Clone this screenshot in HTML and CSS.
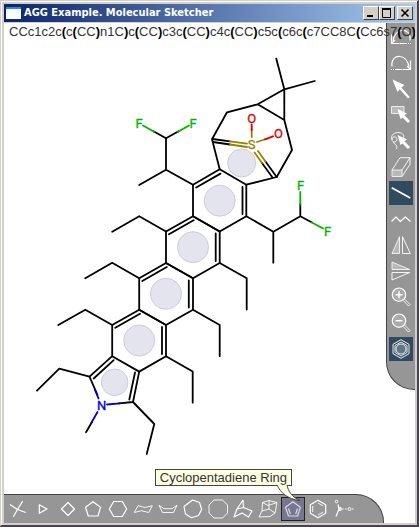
FILE: index.html
```
<!DOCTYPE html>
<html lang="en">
<head>
<meta charset="utf-8">
<title>AGG Example. Molecular Sketcher</title>
<link rel="stylesheet" href="styles.css">
</head>
<body>
<main class="window">
  <header class="titlebar">
    <span class="app-icon"></span>
    <h1 class="title">AGG Example. Molecular Sketcher</h1>
    <div class="caption-buttons">
      <button class="caption" aria-label="Minimize"><svg viewBox="0 0 12 10"><path d="M2 8h6" stroke-width="2"/></svg></button>
      <button class="caption" aria-label="Maximize"><svg viewBox="0 0 12 10"><path d="M1 1h9" stroke-width="2"/><path d="M1.5 1v8.500h8v-8.500"/></svg></button>
      <button class="caption close" aria-label="Close"><svg viewBox="0 0 12 10"><path d="M2.500 1.500l7 7M9.500 1.500l-7 7" stroke-width="1.600"/></svg></button>
    </div>
  </header>

  <section class="client">
    <svg class="canvas" viewBox="4 23 411 500" preserveAspectRatio="xMinYMin meet" role="img" aria-label="Molecule">
      <g class="aromatic">
        <circle cx="241.700" cy="163" r="14"/>
        <circle cx="219.700" cy="200.700" r="15.500"/>
        <circle cx="193" cy="247.200" r="15.500"/>
        <circle cx="166" cy="293.800" r="15.500"/>
        <circle cx="139.200" cy="340.500" r="15.500"/>
        <circle cx="114.700" cy="382.300" r="13.300"/>
      </g>
      <g class="bond">
        <path d="M276.300 58.700L284.300 89.300L314.700 81M284.300 89.300L257.700 104.300L284.300 120ZM257.700 104.300L227 112.300L212 139.300L219.700 169.300M284.300 120L292 150L276.700 177L246.300 184.700"/>
        <path d="M219.700 169.300L246.300 184.700V216.200L219.700 231.500L193 216.200V184.700Z"/>
        <path d="M193 216.200L219.700 231.500V263L193 278.300L166 263V231.500Z"/>
        <path d="M166 263L193 278.300V309.700L166 325L139.200 309.700V278.300Z"/>
        <path d="M139.200 309.700L166 325V356.200L139.200 371.600L112.200 356.200V325Z"/>
        <path d="M196.200 187.500L220.500 173.600M242.500 187V214M169 234.200L193.600 220.300M215.700 233.500V261M142.300 281L166.800 267M188.800 280.500V307.500M115.300 327.800L140 313.800M162 327V354"/>
        <path d="M97.500 395L89.500 376.700L112.200 356.200M139.200 371.600L133 402L119 403.300M93.700 378.500L113.700 360.200M135 372.500L129.300 399.500"/>
        <path d="M89.500 376.700L59.300 368.700L37 390.700M133 402L154.300 424L146.700 454M86 432.300L92 422"/>
        <path d="M166 356.200L192.700 371.500V402.700M193 309.700L219.700 325V356.200M219.700 263L246.700 278.300V309.500"/>
        <path d="M112.200 325L85.300 309.700L58.300 325M139.200 278.300L112.200 262.700L85.300 278.300M166 231.500L139.200 216.200L112.200 231.700"/>
        <path d="M193 184.700L166 169.700L139.200 185M166 169.700V138.300L153.500 131.300M166 138.300L178.500 131.300"/>
        <path d="M246.300 216.200L273.300 231.700V262.700M273.300 231.700L300.300 216.200V204M300.300 216.200L312 222.500"/>
        <path d="M212.500 139L230 141.300M213 142L230 144.500M276.700 177L265.500 161.500M272.500 177.500L262 163"/>
      </g>
      <g class="bond sulfur"><path d="M230 141.300L247 143.600M230 144.500L247 147M265.500 161.500L258 151M262 163L254.500 152.500M251.700 137V129M257 142L266 139"/></g>
      <g class="bond oxygen"><path d="M251.700 130V124.500M265 139.300L273 136.300"/></g>
      <g class="bond nitrogen"><path d="M98.500 398.500L95 390M107 404.500L120 403.300M97.500 412L91.500 422.500"/></g>
      <g class="bond fluorine"><path d="M143 125.500L154 131.700M189 125.500L178 131.700M300.300 192V204.500M323 228.500L311.500 222.200"/></g>
      <g class="atom">
        <text class="t-f" x="139" y="128">F</text><text class="t-f" x="193" y="128">F</text>
        <text class="t-f" x="300.500" y="190">F</text><text class="t-f" x="327.500" y="236">F</text>
        <text class="t-o" x="251.700" y="123">O</text><text class="t-o" x="278.500" y="138">O</text>
        <text class="t-s" x="251.700" y="149">S</text><text class="t-n" x="101.700" y="410">N</text>
      </g>
    </svg>

    <nav class="tools side" aria-label="Editing tools">
      <button class="tool" aria-label="Undo"><svg viewBox="0 0 24 24"><path d="M21 15.500C22 8 17 4.500 12.500 5.500C7 6.500 5 10 4 16"/><path d="M2.500 9.500V18.500H10.500M2.500 18.500L6 15"/><path d="M11 18.500h7M19 18.500h1M21 18.500h1"/></svg></button>
      <button class="tool" aria-label="Redo"><svg viewBox="0 0 24 24"><path d="M3 15.500C2 8 7 4.500 11.500 5.500C17 6.500 19 10 20 16"/><path d="M21.500 9.500V18.500H13.500M21.500 18.500L18 15"/><path d="M6 18.500h7M4 18.500h1M2 18.500h1"/></svg></button>
      <button class="tool" aria-label="Select"><svg viewBox="0 0 24 24"><path class="solid" d="M3.500 2.500L15.500 8L12.500 10.500L20.700 20L19 21.500L10.700 12.300L8.500 15Z"/></svg></button>
      <button class="tool" aria-label="Select rectangle"><svg viewBox="0 0 24 24"><path class="tint" d="M2.500 3.500h12.500v7h-12.500z"/><path class="solid" d="M8.500 6L18 10.500L15.500 12.300L21 18L19 20L13.500 14.500L11.500 16Z"/></svg></button>
      <button class="tool" aria-label="Lasso"><svg viewBox="0 0 24 24"><path class="thin" d="M3 10.500C1 6 6 3 10 3.500C14 4 16 7 14 9M3 10.500C3 7 8 7 8 10.500C8 13.500 3 14 3 10.500M4.500 13C5 16 9 15 7.500 20"/><path class="solid" d="M8.500 6L18 10.500L15.500 12.300L21 18L19 20L13.500 14.500L11.500 16Z"/></svg></button>
      <button class="tool" aria-label="Eraser"><svg viewBox="0 0 24 24"><path class="tint" d="M3 15h10v6.500h-10z"/><path class="thin" d="M3 15L11 2.700H21L13 15M21 2.700V9.300L13 21.500"/></svg></button>
      <button class="tool dark" aria-label="Single bond" aria-pressed="true"><svg viewBox="0 0 24 24"><path d="M2.700 6.700L21.300 17" stroke-width="1.700"/></svg></button>
      <button class="tool" aria-label="Chain"><svg viewBox="0 0 24 24"><path d="M2.500 14.500L7 10L11.300 14.500L16.300 10L21.500 14.500"/></svg></button>
      <button class="tool" aria-label="Flip horizontally"><svg viewBox="0 0 24 24"><path class="tint" d="M3 20.500L10.500 3.700V20.500Z"/><path class="thin" d="M13.500 3.700V20.500H21.300Z"/></svg></button>
      <button class="tool" aria-label="Flip vertically"><svg viewBox="0 0 24 24"><path class="tint" d="M3 3L20.700 10.500H3Z"/><path class="thin" d="M3 13.500H20.700L3 21Z"/></svg></button>
      <button class="tool" aria-label="Zoom in"><svg viewBox="0 0 24 24"><circle class="glass" cx="10" cy="9.700" r="6.700"/><path d="M10 6.200v7M6.500 9.700h7" stroke-width="1.500"/><path class="thin" d="M14.200 15.500L19.500 21L21 19.500L15.700 14.200"/></svg></button>
      <button class="tool" aria-label="Zoom out"><svg viewBox="0 0 24 24"><circle class="glass" cx="10" cy="9.700" r="6.700"/><path d="M6.500 9.700h7" stroke-width="1.500"/><path class="thin" d="M14.200 15.500L19.500 21L21 19.500L15.700 14.200"/></svg></button>
      <button class="tool dark" aria-label="Show aromatic rings" aria-pressed="true"><svg viewBox="0 0 24 24"><path class="thin" d="M12 2.700L20 7.300V16.700L12 21.300L4 16.700V7.300Z"/><path class="thin" d="M12 5L18 8.500V15.500L12 19L6 15.500V8.500Z"/><circle cx="12" cy="12" r="5" fill="#5d7689" class="thin"/></svg></button>
    </nav>

    <nav class="tools base" aria-label="Ring templates">
      <button class="tool" aria-label="Cross"><svg viewBox="0 0 24 24"><path d="M4 7.500L11.500 12.500L19.700 15.500M16.700 4L11.500 12.500L7.300 19.700"/></svg></button>
      <button class="tool" aria-label="Cyclopropane"><svg viewBox="0 0 24 24"><path d="M8.300 7.700V16.300L16 12Z"/></svg></button>
      <button class="tool" aria-label="Cyclobutane"><svg viewBox="0 0 24 24"><path d="M12 5.500L18.500 12L12 18.500L5.500 12Z"/></svg></button>
      <button class="tool" aria-label="Cyclopentane"><svg viewBox="0 0 24 24"><path d="M12 4.700L19.500 10.300L17 19H7.300L4.500 10.300Z"/></svg></button>
      <button class="tool" aria-label="Cyclohexane"><svg viewBox="0 0 24 24"><path d="M3.300 12L7.700 4.500H16.300L20.700 12L16.300 19.500H7.700Z"/></svg></button>
      <button class="tool" aria-label="Chair"><svg viewBox="0 0 24 24"><path class="thin" d="M3.300 15.500L7 8.700L14 10.500L21.300 8.700L17.700 15.500L10.500 13.700Z"/></svg></button>
      <button class="tool" aria-label="Boat"><svg viewBox="0 0 24 24"><path class="thin" d="M3 8.300L6.500 15.500H17.500L21 8.300L16 11.700H8Z"/></svg></button>
      <button class="tool" aria-label="Cycloheptane"><svg viewBox="0 0 24 24"><path d="M11.500 3L18.500 5.500L20.700 12.500L17.500 18.500L10.500 20.700L4.500 17L3 9.500Z"/></svg></button>
      <button class="tool" aria-label="Cyclooctane"><svg viewBox="0 0 24 24"><path class="thin" d="M8 3H16.500L21.500 8V16L16.500 21H8L3 16V8Z"/></svg></button>
      <button class="tool" aria-label="Norbornane"><svg viewBox="0 0 24 24"><path d="M12 3L12.500 10.500L6 12L3 20L11 16L17.500 20L21 14L12.500 10.500M12 3L6 12"/></svg></button>
      <button class="tool" aria-label="Bicyclooctane"><svg viewBox="0 0 24 24"><path class="thin" d="M6.500 5.500L13 3.500L21 5.500L19 16L14 19.500L3 20L6 14L6.500 5.500L12 8.500L21 5.500M6 14L13 12L19 16M13 3.500V12"/></svg></button>
      <button class="tool picked" aria-label="Cyclopentadiene" aria-pressed="true" aria-describedby="tip"><svg viewBox="0 0 24 24"><path d="M12 4.700L19.300 10.300L16.700 19H7.500L4.500 10.300Z"/><path d="M7.500 11.500L9.300 17M16.500 11.500L14.700 17"/></svg></button>
      <button class="tool" aria-label="Benzene"><svg viewBox="0 0 24 24"><path d="M12 3.200L19.700 7.700V16.300L12 20.800L4.300 16.300V7.700Z"/><path class="thin" d="M12 6L17.200 9M17.200 15L12 18M6.700 9V15"/></svg></button>
      <button class="tool" aria-label="Functional group"><svg viewBox="0 0 24 24"><circle class="thin" cx="5.500" cy="4.500" r="1.300"/><path d="M8 12L5 19.500M8 12L7 7.500M8 12h4.500M14 12h1.500M21 12h1.500"/><path class="thin" d="M8 10.500h2v3h-2z"/><circle class="thin" cx="18.500" cy="12" r="1.500"/></svg></button>
    </nav>

    <p class="smiles">CCc1c2c<b>(</b>c<b>(</b>CC<b>)</b>n1C<b>)</b>c<b>(</b>CC<b>)</b>c3c<b>(</b>CC<b>)</b>c4c<b>(</b>CC<b>)</b>c5c<b>(</b>c6c<b>(</b>c7CC8C<b>(</b>Cc6s7<b>(</b>O<b>)</b></p>

    <div class="tooltip" id="tip" role="tooltip">Cyclopentadiene Ring
      <svg class="tail" viewBox="0 0 28 17"><path d="M2 0C6 8 12 14 25 15.500C17 12 13 6 12 0" fill="#ffffe1" stroke="#444" stroke-width="1"/></svg>
    </div>
  </section>
</main>
</body>
</html>
```
FILE: styles.css
```
* { box-sizing: border-box; }

body {
  margin: 0;
  background: #d4d0c8;
  font-family: "Liberation Sans", sans-serif;
}

.window {
  display: flex;
  flex-direction: column;
  min-height: 100vh;
  padding: 3px 2px 2px 3px;
  border: 1px solid #d4d0c8;
  border-right: 2px solid #474250;
  border-bottom: 2px solid #474250;
  background: #d4d0c8;
  box-shadow: inset 1px 1px 0 #fff;
}

.titlebar {
  display: flex;
  align-items: center;
  height: 18px;
  padding: 0 2px;
  margin-bottom: 1px;
  background: linear-gradient(90deg, #0a246a, #a6caf0);
}

.app-icon {
  width: 15px;
  height: 12px;
  background: #fff;
  border-top: 2px solid #2a8ae0;
}

.title {
  flex: 1;
  margin: 0 0 0 3px;
  color: #fff;
  font: bold 11px/18px "DejaVu Sans Condensed", "DejaVu Sans", sans-serif;
  white-space: nowrap;
}

.caption-buttons { display: flex; }

.caption {
  display: grid;
  place-items: center;
  width: 16px;
  height: 14px;
  padding: 0;
  border: 1px solid;
  border-color: #fff #404040 #404040 #fff;
  background: #d4d0c8;
}

.caption svg {
  width: 12px;
  height: 10px;
  fill: none;
  stroke: #000;
}

.close { margin-left: 2px; }

.client {
  position: relative;
  flex: 1;
  display: grid;
  grid-template-columns: minmax(0, 1fr) 29px;
  grid-template-rows: 1fr auto;
  background: #fff;
  overflow: hidden;
}

.canvas {
  grid-area: 1 / 1 / 3 / 3;
  width: 100%;
}

.bond {
  fill: none;
  stroke: #000;
  stroke-width: 1.8;
  stroke-linecap: round;
  stroke-linejoin: round;
}

.sulfur { stroke: #998000; }
.oxygen { stroke: #e00000; }
.nitrogen { stroke: #0000cc; }
.fluorine { stroke: #00b400; }

.aromatic {
  fill: #e4e4ee;
  stroke: #cdcddd;
}

.atom {
  font-family: Roboto, sans-serif;
  font-size: 13px;
  text-anchor: middle;
  stroke-width: 0.3;
}

.t-f { fill: #00b400; stroke: #00b400; }
.t-o { fill: #e00000; stroke: #e00000; }
.t-s { fill: #998000; stroke: #998000; }
.t-n { fill: #0000cc; stroke: #0000cc; }

.tools {
  display: flex;
  background: #969696;
  border: 0 solid #444;
}

.side {
  grid-area: 1 / 2;
  align-self: start;
  flex-direction: column;
  gap: 2px;
  padding: 2px 2px 28px;
  border-width: 0 0 1px 1px;
  border-bottom-left-radius: 28px;
}

.base {
  grid-area: 2 / 1 / 3 / 3;
  justify-self: start;
  gap: 1px;
  padding: 2px 28px 2px 2px;
  border-width: 1px 1px 0 0;
  border-top-right-radius: 28px;
}

.tool {
  width: 24px;
  height: 24px;
  padding: 0;
  border: 0;
  background: none;
}

.tool svg {
  display: block;
  width: 24px;
  height: 24px;
  fill: none;
  stroke: #fff;
  stroke-width: 1.2;
  stroke-linejoin: round;
}

.tool .thin { stroke-width: 0.9; }
.tool .solid { fill: #fff; stroke: none; }
.tool .tint { fill: #b8b8b8; stroke-width: 0.8; }
.tool .glass { fill: #aaa; }

.dark { background: #304a5f; }

.picked {
  background: #76768f;
  box-shadow: inset 0 0 0 1px #222;
}

.picked svg { stroke: #d8d8f4; }

.smiles {
  grid-area: 1 / 1 / 2 / 3;
  align-self: start;
  margin: 1px 0 0 5px;
  color: #333;
  font-size: 13px;
  line-height: 16px;
  white-space: nowrap;
  pointer-events: none;
}

.smiles b { color: #000; }

.tooltip {
  position: absolute;
  right: 123px;
  bottom: 37px;
  padding: 0 4px;
  border: 1px solid #444;
  background: #ffffe1;
  color: #333;
  font-size: 13px;
  line-height: 15px;
  white-space: nowrap;
}

.tail {
  position: absolute;
  top: 15px;
  right: -12px;
  width: 28px;
  height: 17px;
}
```
